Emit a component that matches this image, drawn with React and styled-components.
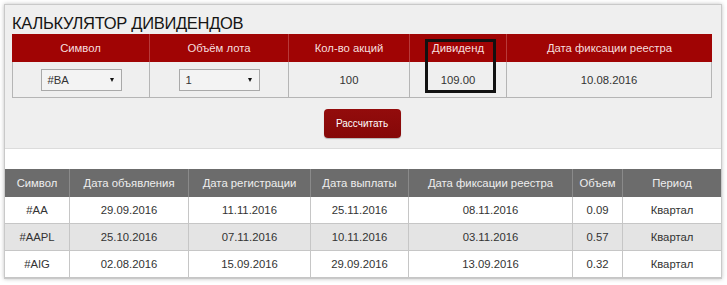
import React from "react";
import styled, { createGlobalStyle } from "styled-components";

const Global = createGlobalStyle`
  html, body { margin: 0; padding: 0; background: #ffffff; }
  body { font-family: "Liberation Sans", Arial, sans-serif; }
`;

const Panel = styled.div`
  margin: 4px;
  width: 716px;
  height: 273px;
  border: 1px solid #c9c9c9;
  box-shadow: 0 0 4px rgba(0, 0, 0, 0.25);
  background: #ffffff;
  display: flex;
  flex-direction: column;
  overflow: hidden;
`;

const Calc = styled.section`
  background: #efefef;
  padding: 0 9px 0 7px;
  height: 143px;
  border-bottom: 1px solid #dcdcdc;
  display: flex;
  flex-direction: column;
`;

const Title = styled.h1`
  margin: 0 0 1px 0;
  padding-top: 8px;
  font-size: 16.5px;
  line-height: 20px;
  font-weight: normal;
  color: #151515;
  letter-spacing: -0.3px;
`;

const CalcTableWrap = styled.div`
  position: relative;
`;

const CalcGrid = styled.div`
  display: grid;
  grid-template-columns: 137px 139px 121px 97px 206px;
  grid-template-rows: 28px 36px;
`;

const RedHead = styled.div`
  background: #a00404;
  color: #f6dede;
  font-size: 11.3px;
  display: flex;
  align-items: center;
  justify-content: center;
  border-left: ${(p) => (p.$first ? "none" : "1px solid #b83a3a")};
`;

const CalcCell = styled.div`
  background: #efefef;
  color: #333;
  font-size: 11.3px;
  display: flex;
  align-items: center;
  justify-content: center;
  border-bottom: 1px solid #b5b5b5;
  border-left: 1px solid #b5b5b5;
  border-right: ${(p) => (p.$last ? "1px solid #b5b5b5" : "none")};
`;

const Select = styled.div`
  width: 81px;
  height: 22px;
  box-sizing: border-box;
  border: 1px solid #a9a9a9;
  background: #f3f3f3;
  display: flex;
  align-items: center;
  justify-content: space-between;
  padding: 0 7px 0 6px;
  font-size: 11.3px;
  color: #333;
`;

const Arrow = styled.span`
  width: 0;
  height: 0;
  border-left: 2.5px solid transparent;
  border-right: 2.5px solid transparent;
  border-top: 4px solid #111;
`;

const Highlight = styled.div`
  position: absolute;
  left: 413px;
  top: 5px;
  width: 71px;
  height: 54px;
  box-sizing: border-box;
  border: 3px solid #111;
  pointer-events: none;
`;

const ButtonRow = styled.div`
  display: flex;
  justify-content: center;
  padding-top: 11px;
`;

const Button = styled.button`
  width: 77px;
  height: 29px;
  border: none;
  border-radius: 4px;
  background: linear-gradient(#930c0c, #850808);
  color: #fff;
  font-family: "Liberation Sans", Arial, sans-serif;
  font-size: 10px;
  padding: 0;
  box-shadow: 0 1px 1px rgba(0, 0, 0, 0.25);
`;

const Spacer = styled.div`
  height: 20px;
  background: #fff;
`;

const DataGrid = styled.div`
  display: grid;
  grid-template-columns: 64px 119px 122px 98px 164px 50px 99px;
  grid-auto-rows: 27px;
  grid-template-rows: 28px;
`;

const GreyHead = styled.div`
  background: #6c6c6c;
  color: #eeeeee;
  font-size: 11.3px;
  display: flex;
  align-items: center;
  justify-content: center;
  border-left: ${(p) => (p.$first ? "none" : "1px solid #8a8a8a")};
`;

const DataCell = styled.div`
  background: ${(p) => (p.$alt ? "#e4e4e4" : "#ffffff")};
  color: #333;
  font-size: 11.3px;
  display: flex;
  align-items: center;
  justify-content: center;
  border-bottom: 1px solid #c6c6c6;
  border-left: ${(p) => (p.$first ? "none" : "1px solid #c6c6c6")};
`;

const calcHeads = ["Символ", "Объём лота", "Кол-во акций", "Дивиденд", "Дата фиксации реестра"];
const dataHeads = ["Символ", "Дата объявления", "Дата регистрации", "Дата выплаты", "Дата фиксации реестра", "Объем", "Период"];
const rows = [
  ["#AA", "29.09.2016", "11.11.2016", "25.11.2016", "08.11.2016", "0.09", "Квартал"],
  ["#AAPL", "25.10.2016", "07.11.2016", "10.11.2016", "03.11.2016", "0.57", "Квартал"],
  ["#AIG", "02.08.2016", "15.09.2016", "29.09.2016", "13.09.2016", "0.32", "Квартал"],
];

export default function App() {
  return (
    <>
      <Global />
      <Panel>
        <Calc>
          <Title>КАЛЬКУЛЯТОР ДИВИДЕНДОВ</Title>
          <CalcTableWrap>
            <CalcGrid>
              {calcHeads.map((h, i) => (
                <RedHead key={h} $first={i === 0}>{h}</RedHead>
              ))}
              <CalcCell>
                <Select>#BA<Arrow /></Select>
              </CalcCell>
              <CalcCell>
                <Select>1<Arrow /></Select>
              </CalcCell>
              <CalcCell>100</CalcCell>
              <CalcCell>109.00</CalcCell>
              <CalcCell $last>10.08.2016</CalcCell>
            </CalcGrid>
            <Highlight />
          </CalcTableWrap>
          <ButtonRow>
            <Button>Рассчитать</Button>
          </ButtonRow>
        </Calc>
        <Spacer />
        <DataGrid>
          {dataHeads.map((h, i) => (
            <GreyHead key={h + i} $first={i === 0}>{h}</GreyHead>
          ))}
          {rows.map((r, ri) =>
            r.map((c, ci) => (
              <DataCell key={ri + "-" + ci} $alt={ri === 1} $first={ci === 0}>{c}</DataCell>
            ))
          )}
        </DataGrid>
      </Panel>
    </>
  );
}
